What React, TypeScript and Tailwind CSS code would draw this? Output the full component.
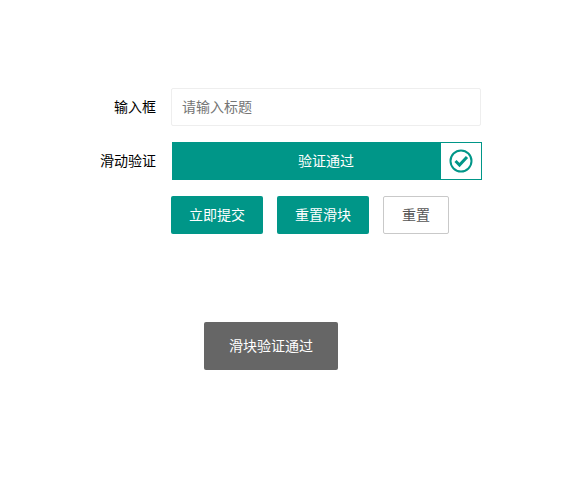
import React from "react";

const font = "font-['Microsoft_YaHei','Noto_Sans_CJK_SC',sans-serif]";

const App = () => {
  return (
    <div className={`relative h-[489px] w-[574px] bg-white text-[14px] text-black ${font}`}>
      <div className="flex flex-col pt-[88px]">
        <div className="flex h-[38px] items-center">
          <label className="w-[156px] pb-[2px] text-right">输入框</label>
          <div className="ml-[15px] flex h-[38px] w-[310px] items-center rounded-[2px] border border-[#eeeeee] pb-[2px] pl-[10px] text-[#757575]">
            请输入标题
          </div>
        </div>
        <div className="mt-[16px] flex h-[38px] items-center">
          <label className="w-[156px] pb-[2px] text-right">滑动验证</label>
          <div className="relative ml-[16px] flex h-[38px] w-[310px] items-center justify-center bg-[#009688] pb-[2px] pr-[2px] text-white">
            验证通过
            <div className="absolute right-0 top-0 flex h-[38px] w-[42px] items-center justify-center border border-[#009688] bg-white">
              <svg width="24" height="24" viewBox="0 0 24 24" fill="none" stroke="#009688">
                <circle cx="12" cy="12" r="10.5" strokeWidth="2" />
                <path d="M6.5 12l4 4 7.5-8" strokeWidth="3" />
              </svg>
            </div>
          </div>
        </div>
        <div className="ml-[171px] mt-[16px] flex h-[38px] gap-[14px]">
          <button className="w-[92px] rounded-[2px] bg-[#009688] pb-[2px] text-white">立即提交</button>
          <button className="w-[92px] rounded-[2px] bg-[#009688] pb-[2px] text-white">重置滑块</button>
          <button className="w-[66px] rounded-[2px] border border-[#c9c9c9] bg-white pb-[2px] text-[#555]">重置</button>
        </div>
      </div>
      <div className="absolute left-[204px] top-[322px] flex h-[48px] w-[134px] items-center justify-center rounded-[2px] bg-[#666] pb-[2px] text-white">
        滑块验证通过
      </div>
    </div>
  );
};

export default App;
